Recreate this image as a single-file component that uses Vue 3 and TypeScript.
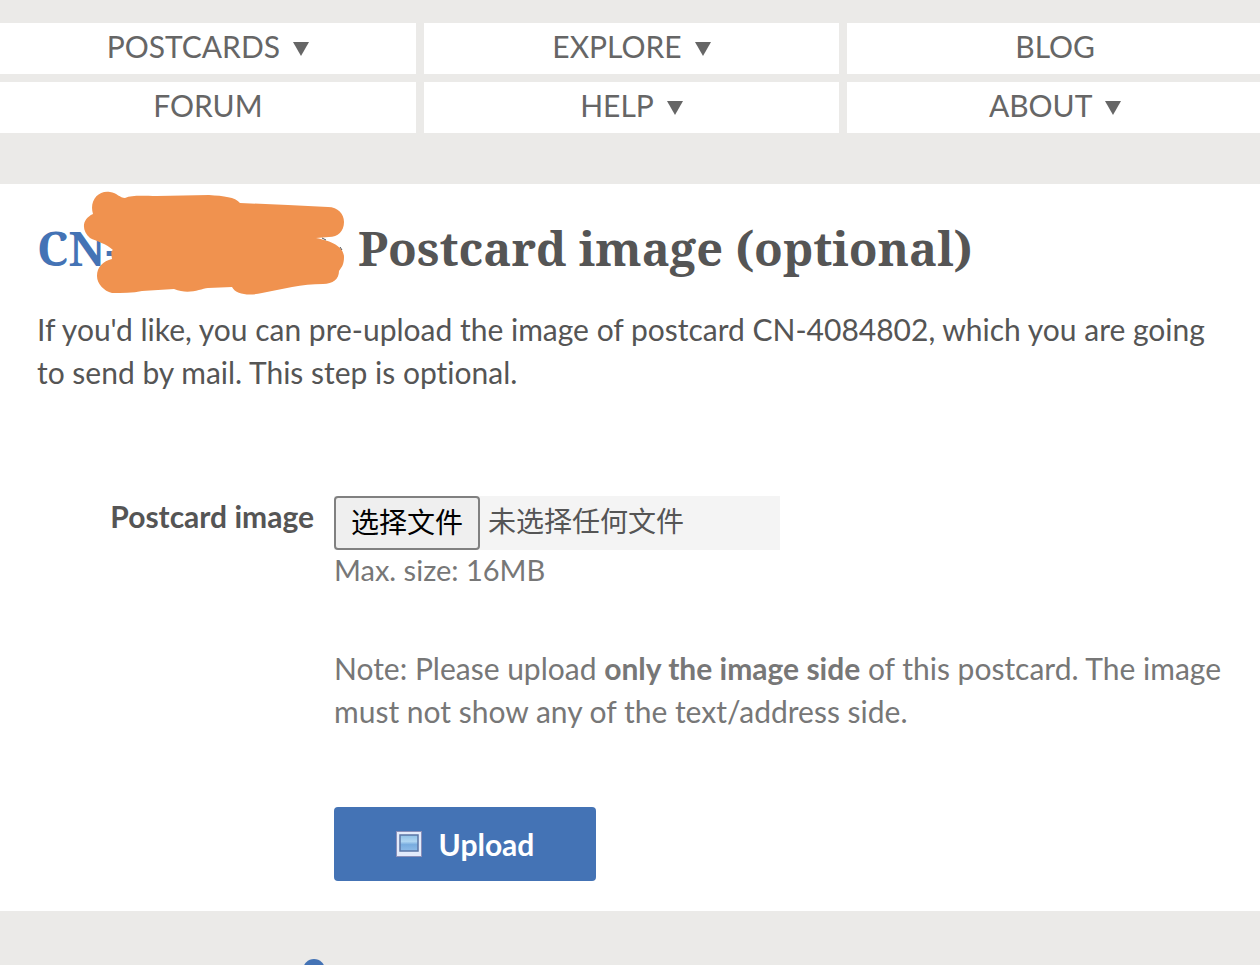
<script setup lang="ts">
import { ref } from 'vue'

interface NavItem {
  label: string
  menu: boolean
}

const items: NavItem[] = [
  { label: 'POSTCARDS', menu: true },
  { label: 'EXPLORE', menu: true },
  { label: 'BLOG', menu: false },
  { label: 'FORUM', menu: false },
  { label: 'HELP', menu: true },
  { label: 'ABOUT', menu: true },
]

const fileName = ref('未选择任何文件')

function onPick(event: Event) {
  const input = event.target as HTMLInputElement
  fileName.value = input.files?.[0]?.name ?? '未选择任何文件'
}
</script>

<template>
  <div class="page">
    <nav class="nav">
      <a v-for="item in items" :key="item.label" href="#" class="nav-item">
        <span>{{ item.label }}</span>
        <svg v-if="item.menu" class="caret" viewBox="0 0 16 14" aria-hidden="true">
          <path d="M0 0H16L8 14Z" />
        </svg>
      </a>
    </nav>

    <main class="content">
      <h1 class="title">
        <a href="#" class="code">CN-</a>
        <span>Postcard image (optional)</span>
        <svg class="scribble" viewBox="0 0 264 106" aria-hidden="true">
          <path
            class="ink"
            d="M11 24C7 11 16 0 28 2C35 3 38 8 43 8C50 5 60 6 75 6L127 5C142 6 153 7 158 13L206 15L246 17C256 17 262 24 262 32C262 41 256 47 247 47L234 48C250 51 262 57 262 67C262 74 260 77 257 81C257 89 251 94 241 94C220 94 200 99 180 103C168 106 154 105 150 97L126 98C118 99 107 105 92 99L60 101C51 103 40 103 30 103C22 101 15 94 15 86C15 77 21 71 30 69C29 62 29 61 31 60C25 54 14 51 8 48C-1 40 0 29 11 24Z"
          />
          <path class="edge" d="M240 48L244 50M258 57L260 60" />
        </svg>
      </h1>

      <p class="intro">
        If you'd like, you can pre-upload the image of postcard CN-4084802, which you are going to
        send by mail. This step is optional.
      </p>

      <form class="form" @submit.prevent>
        <label class="field-label" for="postcard-image">Postcard image</label>
        <div class="field">
          <div class="picker">
            <span class="picker-button">选择文件</span>
            <span class="picker-name">{{ fileName }}</span>
            <input id="postcard-image" class="picker-input" type="file" @change="onPick" />
          </div>
          <p class="hint">Max. size: 16MB</p>
          <p class="note">
            Note: Please upload <strong>only the image side</strong> of this postcard. The image must
            not show any of the text/address side.
          </p>
          <button type="submit" class="upload">
            <svg class="upload-icon" viewBox="0 0 26 26" aria-hidden="true">
              <defs>
                <linearGradient id="sky" x1="0" y1="0" x2="0" y2="1">
                  <stop offset="0" stop-color="#8fc0e6" />
                  <stop offset="0.4" stop-color="#b0d6f2" />
                  <stop offset="0.6" stop-color="#78acdf" />
                  <stop offset="1" stop-color="#8dbbe8" />
                </linearGradient>
              </defs>
              <rect x="0.5" y="0.5" width="25" height="25" fill="#e3ebfb" stroke="#8a8fb8" />
              <rect x="4" y="4" width="18" height="16" fill="url(#sky)" stroke="#5b76a5" stroke-width="1.5" />
            </svg>
            <span>Upload</span>
          </button>
        </div>
      </form>
    </main>

    <footer class="footer">
      <svg class="dot" viewBox="0 0 22 22" aria-hidden="true">
        <circle cx="11" cy="11" r="11" />
      </svg>
    </footer>
  </div>
</template>

<style>
body {
  margin: 0;
  background: #ebeae8;
}
</style>

<style scoped>
.page {
  display: flex;
  flex-direction: column;
  height: 100vh;
  overflow: hidden;
  background: #ebeae8;
  color: #555;
  font-family: Lato, 'Noto Sans CJK SC', sans-serif;
  font-size: 30px;
  line-height: 43px;
  font-variant-ligatures: none;
}

.nav {
  display: grid;
  grid-template-columns: repeat(3, 1fr);
  grid-auto-rows: 51px;
  gap: 8px;
  margin: 23px -3px 51px 0;
}

.nav-item {
  display: flex;
  align-items: center;
  justify-content: center;
  gap: 13px;
  background: #fff;
  color: #666;
  text-decoration: none;
}

.nav-item span {
  padding-bottom: 4px;
}

.caret {
  width: 16px;
  height: 14px;
  fill: #666;
}

.content {
  padding: 32px 32px 30px 37px;
  background: #fff;
}

.title {
  position: relative;
  display: flex;
  margin: 0;
  font-family: 'Noto Serif', 'DejaVu Serif Condensed', 'DejaVu Serif', serif;
  font-size: 47px;
  font-weight: 700;
  line-height: 64px;
  white-space: nowrap;
}

.code {
  width: 321px;
  color: #4473b5;
  text-decoration: none;
}

.scribble {
  position: absolute;
  left: 45px;
  top: -26px;
  width: 264px;
  height: 106px;
}

.ink {
  fill: #f0924f;
}

.edge {
  stroke: #555;
  stroke-width: 1;
}

.intro {
  max-width: 1170px;
  margin: 28px 0 102px;
}

.form {
  display: grid;
  grid-template-columns: 277px 1fr;
  column-gap: 20px;
}

.field-label {
  font-weight: 700;
  line-height: 40px;
  text-align: right;
}

.field {
  color: #777;
}

.picker {
  position: relative;
  display: flex;
  align-items: center;
  gap: 8px;
  width: 446px;
  height: 54px;
  background: #f4f4f4;
  color: #555;
  font-size: 28px;
}

.picker-button {
  box-sizing: border-box;
  height: 54px;
  padding: 0 15px;
  border: 2px solid #808080;
  border-radius: 4px;
  background: #efefef;
  color: #000;
  line-height: 48px;
}

.picker-name {
  padding-bottom: 4px;
}

.picker-input {
  position: absolute;
  inset: 0;
  width: 100%;
  opacity: 0;
}

.hint {
  margin: 0;
  font-size: 29px;
  line-height: 39px;
}

.note {
  margin: 58px 0 74px;
}

.upload {
  display: flex;
  align-items: center;
  justify-content: center;
  gap: 17px;
  width: 262px;
  height: 74px;
  border: 0;
  border-radius: 4px;
  background: #4473b5;
  color: #fff;
  font: inherit;
  font-weight: 700;
}

.upload-icon {
  width: 26px;
  height: 26px;
}

.footer {
  flex: 1;
  padding: 48px 303px 0;
}

.dot {
  display: block;
  width: 22px;
  height: 22px;
  fill: #4473b5;
}
</style>
